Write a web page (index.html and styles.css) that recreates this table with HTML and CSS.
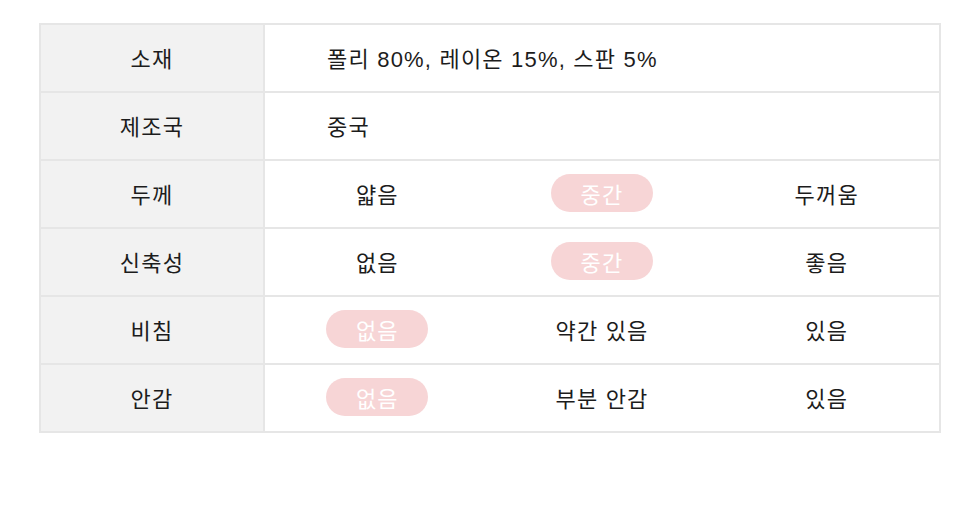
FILE: index.html
```html
<!DOCTYPE html>
<html lang="ko">
<head>
<meta charset="UTF-8">
<meta name="viewport" content="width=device-width, initial-scale=1.0">
<title>상품 정보</title>
<link rel="stylesheet" href="styles.css">
</head>
<body>
  <div class="spec-table">
    <div class="spec-label">소재</div>
    <div class="spec-value spec-text">폴리 80%, 레이온 15%, 스판 5%</div>

    <div class="spec-label">제조국</div>
    <div class="spec-value spec-text">중국</div>

    <div class="spec-label">두께</div>
    <div class="spec-value">
      <span class="opt">얇음</span>
      <span class="opt"><span class="pill">중간</span></span>
      <span class="opt">두꺼움</span>
    </div>

    <div class="spec-label">신축성</div>
    <div class="spec-value">
      <span class="opt">없음</span>
      <span class="opt"><span class="pill">중간</span></span>
      <span class="opt">좋음</span>
    </div>

    <div class="spec-label">비침</div>
    <div class="spec-value">
      <span class="opt"><span class="pill">없음</span></span>
      <span class="opt">약간 있음</span>
      <span class="opt">있음</span>
    </div>

    <div class="spec-label">안감</div>
    <div class="spec-value">
      <span class="opt"><span class="pill">없음</span></span>
      <span class="opt">부분 안감</span>
      <span class="opt">있음</span>
    </div>
  </div>
</body>
</html>
```

FILE: styles.css
```css
body {
  margin: 0;
  padding: 23px 39px;
  background-color: #fff;
  font-family: "Liberation Sans", "Noto Sans CJK KR", sans-serif;
  color: #1c1c1c;
}
.spec-table {
  display: grid;
  grid-template-columns: 222px 1fr;
  grid-auto-rows: 66px;
  gap: 2px;
  padding: 2px;
  width: 898px;
  background-color: #e6e6e6;
}
.spec-label {
  display: flex;
  align-items: center;
  justify-content: center;
  padding-bottom: 2px;
  background-color: #f2f2f2;
  font-size: 22px;
  letter-spacing: 1.2px;
}
.spec-value {
  display: grid;
  grid-template-columns: repeat(3, 1fr);
  align-items: center;
  padding-bottom: 2px;
  background-color: #fff;
  font-size: 22px;
  letter-spacing: 1.2px;
}
.spec-text {
  display: flex;
  padding-left: 62px;
}
.opt {
  display: flex;
  justify-content: center;
}
.pill {
  display: inline-flex;
  align-items: center;
  justify-content: center;
  width: 102px;
  height: 38px;
  border-radius: 19px;
  background-color: #f7d5d6;
  color: #fff;
}
```
